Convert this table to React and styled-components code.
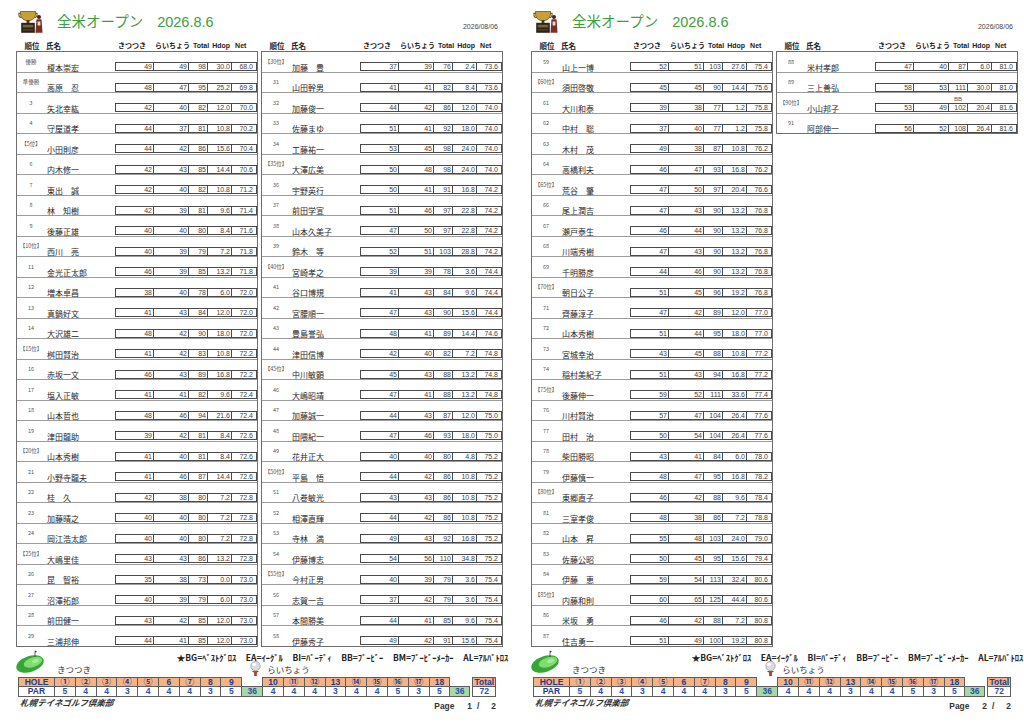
import React from 'react';
import styled, { createGlobalStyle } from 'styled-components';

const GlobalStyle = createGlobalStyle`
  html, body { margin: 0; padding: 0; background: #fff; }
  body {
    width: 1024px; height: 724px; overflow: hidden;
    font-family: "Liberation Sans", "Noto Sans CJK JP", sans-serif;
    color: #333;
  }
  * { box-sizing: border-box; }
`;

const JP = `"Noto Sans CJK JP", "Liberation Sans", sans-serif`;
const LAT = `"Liberation Sans", "Noto Sans CJK JP", sans-serif`;

const Sheet = styled.div`
  display: flex;
  width: 1024px;
  height: 724px;
  background: #fff;
`;

const Page = styled.section`
  width: ${p => p.$w}px;
  flex: none;
  padding-left: 16px;
  display: flex;
  flex-direction: column;
`;

const PageHead = styled.header`
  height: 34px;
  width: 482px;
  padding: 8px 0 0 2px;
  display: flex;
  align-items: flex-start;
`;

const Title = styled.h1`
  margin: 0 0 0 13px;
  display: flex;
  align-items: baseline;
  font-weight: 400;
  line-height: 25px;
  color: #3f9e3c;
  white-space: nowrap;
`;

const TitleJp = styled.span`
  font-family: ${JP};
  font-size: 14.5px;
`;

const TitleDate = styled.span`
  font-family: ${LAT};
  font-size: 14.5px;
  margin-left: 14px;
`;

const DateText = styled.div`
  margin-left: auto;
  align-self: flex-end;
  margin-bottom: 3px;
  font-size: 7px;
  line-height: 8px;
  color: #444;
`;

const Columns = styled.div`
  display: flex;
  gap: 3px;
  align-items: flex-start;
  height: 613.5px;
`;

const Column = styled.div`
  width: 242px;
  display: flex;
  flex-direction: column;
`;

const ColHead = styled.div`
  display: grid;
  grid-template-columns: 28px 70px 142px;
  height: 17px;
  padding: 0 1px 1.5px;
  align-items: end;
  font-family: ${JP};
  font-weight: 700;
  font-size: 7.5px;
  line-height: 9px;
  color: #222;
`;

const HeadRank = styled.div`
  text-align: center;
  padding-left: 2px;
`;

const HeadName = styled.div`
  padding-left: 1px;
`;

const ScoreHead = styled.div`
  display: flex;
  align-items: baseline;
  padding-left: 3px;
  white-space: nowrap;
`;

const HeadCell = styled.span`
  margin-left: ${p => p.$gap || 0}px;
  font-family: ${p => (p.$lat ? LAT : JP)};
  font-size: 7px;
`;

const Table = styled.div`
  border: 1px solid #6e6e6e;
  display: flex;
  flex-direction: column;
`;

const Row = styled.div`
  display: grid;
  grid-template-columns: 28px 70px 142px;
  height: 20.5px;
  border-bottom: 1px solid #9c9c9c;
  &:last-child { border-bottom: none; height: 19.5px; }
`;

const Rank = styled.div`
  align-self: start;
  padding-top: 6.5px;
  font-family: ${JP};
  font-size: 5.5px;
  line-height: 6px;
  text-align: center;
  color: #555;
  white-space: nowrap;
`;

const Name = styled.div`
  align-self: end;
  padding-left: 2px;
  font-family: ${JP};
  font-size: 8px;
  line-height: 9px;
  color: #262626;
  white-space: pre;
`;

const Scores = styled.div`
  align-self: end;
  margin-bottom: 0.5px;
  height: 9px;
  display: grid;
  grid-template-columns: 37px 35px 19px 24px 23px;
  border: 1px solid #4a4a4a;
`;

const Cell = styled.div`
  position: relative;
  font-family: ${LAT};
  font-size: 7px;
  line-height: 7px;
  text-align: right;
  padding-right: 1px;
  color: #444;
  & + & { border-left: 1px solid #4a4a4a; }
`;

const Mark = styled.span`
  position: absolute;
  left: 0;
  right: 0;
  bottom: 100%;
  margin-bottom: 2px;
  text-align: center;
  font-size: 6px;
  line-height: 6px;
  color: #555;
`;

const Footer = styled.div`
  margin-left: -1px;
  margin-top: 2px;
  display: grid;
  grid-template-columns: 40px repeat(9, 20.8px) 21px repeat(9, 20.8px) 20px 3px 23px;
  grid-template-rows: 12px 15px 10px 10px;
`;

const Legend = styled.div`
  grid-row: 1;
  grid-column: 8 / -1;
  margin-left: -3px;
  margin-right: -12px;
  align-self: end;
  display: flex;
  justify-content: space-between;
  font-family: ${JP};
  font-weight: 700;
  font-size: 8.5px;
  line-height: 9px;
  color: #222;
  white-space: nowrap;
`;

const CourseIcon = styled.svg`
  grid-row: 1 / 3;
  grid-column: 1;
`;

const NineLabel = styled.div`
  grid-row: 2;
  grid-column: ${p => p.$col};
  align-self: center;
  padding-left: ${p => p.$pad}px;
  font-family: ${JP};
  font-size: 8.5px;
  line-height: 11px;
  color: #333;
  white-space: nowrap;
`;

const BallIcon = styled.svg`
  grid-row: 2;
  grid-column: 11;
  justify-self: end;
  align-self: end;
  margin: 0 1px 1px 0;
`;

const HoleCell = styled.div`
  grid-row: ${p => p.$row};
  grid-column: ${p => p.$col};
  margin-left: ${p => (p.$indent ? 3 : -1)}px;
  margin-top: ${p => (p.$row === 4 ? -1 : 0)}px;
  border: 1px solid #5e5e5e;
  background: ${p => p.$bg};
  display: flex;
  align-items: center;
  justify-content: center;
  font-family: ${p => (p.$circ ? JP : LAT)};
  font-weight: 700;
  font-size: ${p => (p.$circ ? 9 : 8.5)}px;
  line-height: 8px;
  color: ${p => p.$fg};
  white-space: nowrap;
`;

const Bottom = styled.div`
  display: flex;
  justify-content: space-between;
  width: 480px;
  padding-left: 4px;
  height: 14px;
`;

const Club = styled.div`
  font-family: ${JP};
  font-style: italic;
  font-weight: 700;
  font-size: 8.5px;
  line-height: 10px;
  color: #333;
  transform: skewX(-8deg);
`;

const PageNo = styled.div`
  display: flex;
  margin-top: 4px;
  font-family: ${LAT};
  font-weight: 700;
  font-size: 8.4px;
  line-height: 10px;
  color: #333;
`;

const PageNum = styled.span`
  margin-left: ${p => p.$gap}px;
`;

const ORANGE = '#f4b387';
const GREEN = '#a8d9a0';
const NAVY = '#1f3b8c';
const BLUE = '#2a4fb0';

const p1c1 = `榎本崇宏 49 49 98 30.0 68.0
高原　忍 48 47 95 25.2 69.8
矢北幸紘 42 40 82 12.0 70.0
守屋道孝 44 37 81 10.8 70.2
小田則彦 44 42 86 15.6 70.4
内木修一 42 43 85 14.4 70.6
東出　誠 42 40 82 10.8 71.2
林　知樹 42 39 81 9.6 71.4
後藤正雄 40 40 80 8.4 71.6
西川　亮 40 39 79 7.2 71.8
金光正太郎 46 39 85 13.2 71.8
増本卓昌 38 40 78 6.0 72.0
真鍋好文 41 43 84 12.0 72.0
大沢雄二 48 42 90 18.0 72.0
桝田賢治 41 42 83 10.8 72.2
赤坂一文 46 43 89 16.8 72.2
塩入正敏 41 41 82 9.6 72.4
山本哲也 48 46 94 21.6 72.4
津田龍助 39 42 81 8.4 72.6
山本秀樹 41 40 81 8.4 72.6
小野寺龍夫 41 46 87 14.4 72.6
桂　久 42 38 80 7.2 72.8
加藤晴之 40 40 80 7.2 72.8
岡江浩太郎 40 40 80 7.2 72.8
大嶋里佳 43 43 86 13.2 72.8
昆　智裕 35 38 73 0.0 73.0
沼澤拓郎 40 39 79 6.0 73.0
前田健一 43 42 85 12.0 73.0
三浦邦伸 44 41 85 12.0 73.0`;

const p1c2 = `加藤　豊 37 39 76 2.4 73.6
山田幹男 41 41 82 8.4 73.6
加藤俊一 44 42 86 12.0 74.0
佐藤まゆ 51 41 92 18.0 74.0
工藤祐一 53 45 98 24.0 74.0
大澤広美 50 48 98 24.0 74.0
宇野英行 50 41 91 16.8 74.2
前田学宣 51 46 97 22.8 74.2
山本久美子 47 50 97 22.8 74.2
鈴木　等 52 51 103 28.8 74.2
宮崎孝之 39 39 78 3.6 74.4
谷口博規 41 43 84 9.6 74.4
宮腰順一 47 43 90 15.6 74.4
豊島誉弘 48 41 89 14.4 74.6
津田信博 42 40 82 7.2 74.8
中川敏顕 45 43 88 13.2 74.8
大嶋昭靖 47 41 88 13.2 74.8
加藤誠一 44 43 87 12.0 75.0
田隈紀一 47 46 93 18.0 75.0
花井正大 40 40 80 4.8 75.2
平島　悟 44 42 86 10.8 75.2
八巻敏光 43 43 86 10.8 75.2
相澤直輝 44 42 86 10.8 75.2
寺林　満 49 43 92 16.8 75.2
伊藤博志 54 56 110 34.8 75.2
今村正男 40 39 79 3.6 75.4
志賀一吉 37 42 79 3.6 75.4
本間勝美 44 41 85 9.6 75.4
伊藤秀子 49 42 91 15.6 75.4`;

const p2c1 = `山上一博 52 51 103 27.6 75.4
須田啓敬 45 45 90 14.4 75.6
大川和泰 39 38 77 1.2 75.8
中村　聡 37 40 77 1.2 75.8
木村　茂 49 38 87 10.8 76.2
高橋利夫 46 47 93 16.8 76.2
荒谷　肇 47 50 97 20.4 76.6
尾上潤吉 47 43 90 13.2 76.8
瀬戸泰生 46 44 90 13.2 76.8
川端秀樹 47 43 90 13.2 76.8
千明勝彦 44 46 90 13.2 76.8
朝日公子 51 45 96 19.2 76.8
齊藤淳子 47 42 89 12.0 77.0
山本秀樹 51 44 95 18.0 77.0
宮城幸治 43 45 88 10.8 77.2
稲村美紀子 51 43 94 16.8 77.2
後藤伸一 59 52 111 33.6 77.4
川村賢治 57 47 104 26.4 77.6
田村　治 50 54 104 26.4 77.6
柴田勝昭 43 41 84 6.0 78.0
伊藤慎一 48 47 95 16.8 78.2
東郷直子 46 42 88 9.6 78.4
三室孝俊 48 38 86 7.2 78.8
山本　昇 55 48 103 24.0 79.0
佐藤公昭 50 45 95 15.6 79.4
伊藤　恵 59 54 113 32.4 80.6
内藤和則 60 65 125 44.4 80.6
米坂　勇 46 42 88 7.2 80.8
住吉勇一 51 49 100 19.2 80.8`;

const p2c2 = `米村孝郎 47 40 87 6.0 81.0
三上善弘 58 53 111 30.0 81.0
小山邦子 53 49 102 20.4 81.6 BB
阿部伸一 56 52 108 26.4 81.6`;

const parse = (text, start) =>
  text.split('\n').map((line, i) => {
    const [name, a, b, t, h, n, mark] = line.split(' ');
    const pos = start + i;
    const rank = pos === 1 ? '優勝' : pos === 2 ? '準優勝' : pos % 5 === 0 ? `【${pos}位】` : String(pos);
    return { pos, rank, name, vals: [a, b, t, h, n], mark };
  });

const LEGEND = ['★BG=ﾍﾞｽﾄｸﾞﾛｽ', 'EA=ｲｰｸﾞﾙ', 'BI=ﾊﾞｰﾃﾞｨ', 'BB=ﾌﾞｰﾋﾞｰ', 'BM=ﾌﾞｰﾋﾞｰﾒｰｶｰ', 'AL=ｱﾙﾊﾞﾄﾛｽ'];

const Logo = () => (
  <svg width="26" height="26" viewBox="0 0 26 26">
    <path d="M2.5 3.5h15v2.2c0 4.3-3.3 7-7.5 7s-7.5-2.7-7.5-7z" fill="#c8a03a" stroke="#5b4410" strokeWidth="0.7" />
    <path d="M2.8 5.4H.9v1.4c0 1.8 1.2 2.9 3 2.9" fill="none" stroke="#7d5d16" strokeWidth="1.1" />
    <path d="M17.2 5.4h1.9v1.4c0 1.8-1.2 2.9-3 2.9" fill="none" stroke="#7d5d16" strokeWidth="1.1" />
    <rect x="8.6" y="12.3" width="2.8" height="2.6" fill="#3a2f1d" />
    <rect x="3.2" y="14.8" width="13.6" height="10" fill="#2a241d" />
    <rect x="4.8" y="16.8" width="10.4" height="2.6" fill="#7a6434" />
    <rect x="4.8" y="21" width="10.4" height="1.6" fill="#4a3e26" />
    <circle cx="21" cy="9" r="2" fill="#4a2219" />
    <path d="M18.4 11.8c.8-.6 4.4-.6 5.2 0l.9 13h-7z" fill="#7a2e24" />
    <path d="M19.6 13.5h2.8v4h-2.8z" fill="#e8ddd0" />
  </svg>
);

const Course = () => (
  <CourseIcon width="32" height="23" viewBox="0 0 32 23">
    <ellipse cx="15" cy="14" rx="14.2" ry="8" transform="rotate(-18 15 14)" fill="#36a638" />
    <ellipse cx="18" cy="12.2" rx="9.6" ry="4.8" transform="rotate(-18 18 12.2)" fill="#7fdc71" />
    <ellipse cx="20.5" cy="11" rx="3.6" ry="1.8" transform="rotate(-18 20.5 11)" fill="#a6ec98" />
    <line x1="20" y1="0.8" x2="20" y2="7" stroke="#2d2d2d" strokeWidth="0.7" />
    <path d="M20 .8l2.2.9-2.2.9z" fill="#2d2d2d" />
  </CourseIcon>
);

const Ball = () => (
  <BallIcon width="13" height="15" viewBox="0 0 13 15">
    <circle cx="6.5" cy="5" r="4.7" fill="#dcdcdc" stroke="#8c8c8c" strokeWidth="0.6" />
    <ellipse cx="5" cy="3.4" rx="2.1" ry="1.4" fill="#fff" />
    <path d="M2.8 10h7.4l-2.3 1.8V15H5.1v-3.2z" fill="#b2402f" />
  </BallIcon>
);

const ScoreColumn = ({ rows }) => (
  <Column>
    <ColHead>
      <HeadRank>順位</HeadRank>
      <HeadName>氏名</HeadName>
      <ScoreHead>
        <HeadCell>きつつき</HeadCell>
        <HeadCell $gap={9}>らいちょう</HeadCell>
        <HeadCell $gap={3} $lat>Total</HeadCell>
        <HeadCell $gap={3} $lat>Hdop</HeadCell>
        <HeadCell $gap={5} $lat>Net</HeadCell>
      </ScoreHead>
    </ColHead>
    <Table>
      {rows.map(r => (
        <Row key={r.pos}>
          <Rank>{r.rank}</Rank>
          <Name>{r.name}</Name>
          <Scores>
            {r.vals.map((v, i) => (
              <Cell key={i}>
                {i === 2 && r.mark ? <Mark>{r.mark}</Mark> : null}
                {v}
              </Cell>
            ))}
          </Scores>
        </Row>
      ))}
    </Table>
  </Column>
);

const FRONT = ['①', '②', '③', '④', '⑤', '6', '⑦', '8', '9'];
const BACK = ['10', '⑪', '⑫', '13', '⑭', '⑮', '⑯', '⑰', '18'];
const PAR_F = [5, 4, 4, 3, 4, 4, 4, 3, 5];
const PAR_B = [4, 4, 4, 3, 4, 4, 5, 3, 5];

const isCirc = s => !/^\d+$/.test(s);

const ScoreCard = () => (
  <Footer>
    <Course />
    <Legend>
      {LEGEND.map(t => (
        <span key={t}>{t}</span>
      ))}
    </Legend>
    <NineLabel $col="2 / 8" $pad={2}>きつつき</NineLabel>
    <Ball />
    <NineLabel $col="12 / 18" $pad={4}>らいちょう</NineLabel>

    <HoleCell $row={3} $col={1} $indent $bg={ORANGE} $fg={NAVY}>HOLE</HoleCell>
    {FRONT.map((h, i) => (
      <HoleCell key={'f' + i} $row={3} $col={2 + i} $bg={ORANGE} $fg={NAVY} $circ={isCirc(h)}>{h}</HoleCell>
    ))}
    {BACK.map((h, i) => (
      <HoleCell key={'b' + i} $row={3} $col={12 + i} $bg={ORANGE} $fg={NAVY} $circ={isCirc(h)}>{h}</HoleCell>
    ))}
    <HoleCell $row={3} $col={23} $bg={ORANGE} $fg={NAVY}>Total</HoleCell>

    <HoleCell $row={4} $col={1} $indent $bg="#fff" $fg={NAVY}>PAR</HoleCell>
    {PAR_F.map((p, i) => (
      <HoleCell key={'pf' + i} $row={4} $col={2 + i} $bg="#fff" $fg={BLUE}>{p}</HoleCell>
    ))}
    <HoleCell $row={4} $col={11} $bg={GREEN} $fg={BLUE}>36</HoleCell>
    {PAR_B.map((p, i) => (
      <HoleCell key={'pb' + i} $row={4} $col={12 + i} $bg="#fff" $fg={BLUE}>{p}</HoleCell>
    ))}
    <HoleCell $row={4} $col={21} $bg={GREEN} $fg={BLUE}>36</HoleCell>
    <HoleCell $row={4} $col={23} $bg="#fff" $fg={BLUE}>72</HoleCell>
  </Footer>
);

const ResultPage = ({ w, cols, page }) => (
  <Page $w={w}>
    <PageHead>
      <Logo />
      <Title>
        <TitleJp>全米オープン</TitleJp>
        <TitleDate>2026.8.6</TitleDate>
      </Title>
      <DateText>2026/08/06</DateText>
    </PageHead>
    <Columns>
      {cols.map((rows, i) => (
        <ScoreColumn key={i} rows={rows} />
      ))}
    </Columns>
    <ScoreCard />
    <Bottom>
      <Club>札幌テイネゴルフ倶楽部</Club>
      <PageNo>
        <span>Page</span>
        <PageNum $gap={13}>{page}</PageNum>
        <PageNum $gap={5}>/</PageNum>
        <PageNum $gap={12}>2</PageNum>
      </PageNo>
    </Bottom>
  </Page>
);

export default function App() {
  return (
    <>
      <GlobalStyle />
      <Sheet>
        <ResultPage w={515} page={1} cols={[parse(p1c1, 1), parse(p1c2, 30)]} />
        <ResultPage w={509} page={2} cols={[parse(p2c1, 59), parse(p2c2, 88)]} />
      </Sheet>
    </>
  );
}
